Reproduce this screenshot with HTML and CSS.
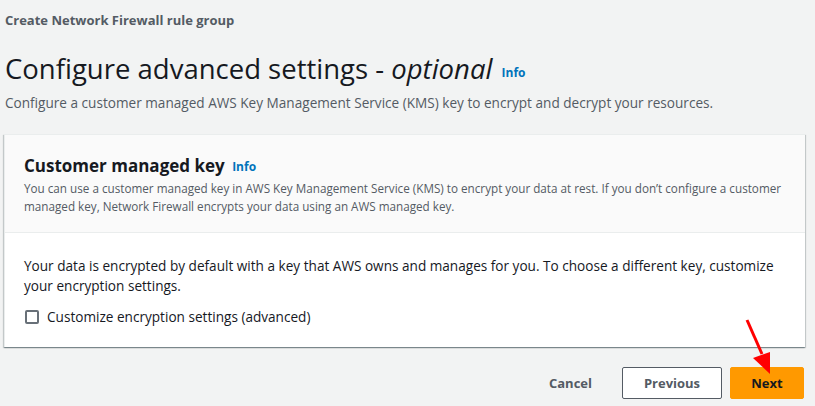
FILE: index.html
```html
<!DOCTYPE html>
<html>
<head>
<meta charset="utf-8">
<link rel="stylesheet" href="styles.css">
</head>
<body>
<div class="page">
  <div class="breadcrumb">Create Network Firewall rule group</div>
  <h1 class="title">Configure advanced settings - <em>optional</em> <a class="info info-lg">Info</a></h1>
  <p class="subtitle">Configure a customer managed AWS Key Management Service (KMS) key to encrypt and decrypt your resources.</p>
  <section class="card">
    <div class="card-header">
      <h2 class="card-title">Customer managed key <a class="info">Info</a></h2>
      <p class="card-desc">You can use a customer managed key in AWS Key Management Service (KMS) to encrypt your data at rest. If you don’t configure a customer managed key, Network Firewall encrypts your data using an AWS managed key.</p>
    </div>
    <div class="card-body">
      <p class="body-text">Your data is encrypted by default with a key that AWS owns and manages for you. To choose a different key, customize your encryption settings.</p>
      <label class="check"><span class="box"></span>Customize encryption settings (advanced)</label>
    </div>
  </section>
  <div class="actions">
    <button class="btn btn-link">Cancel</button>
    <button class="btn btn-normal">Previous</button>
    <button class="btn btn-primary">Next</button>
  </div>
  <svg class="arrow" width="40" height="60" viewBox="0 0 40 60">
    <line x1="7" y1="10" x2="22" y2="44" stroke="#ff0000" stroke-width="3"/>
    <polygon points="13,48 30,42 30,64" fill="#ff0000"/>
  </svg>
</div>
</body>
</html>
```
FILE: styles.css
```css
* { box-sizing: border-box; }
html, body { margin: 0; padding: 0; }
body {
  background: #f2f3f3;
  font-family: "Open Sans", "Noto Sans", sans-serif;
  color: #16191f;
  width: 815px;
  height: 406px;
  overflow: hidden;
}
.page {
  position: relative;
  padding: 12px 10px 0 4px;
}
.breadcrumb {
  font-size: 13px;
  font-weight: 700;
  color: #545b64;
  line-height: 16px;
  padding-left: 1px;
}
.title {
  margin: 23px 0 0 1px;
  font-size: 27.5px;
  font-weight: 400;
  line-height: 36px;
  color: #16191f;
}
.title em { font-style: italic; }
.info {
  color: #0073bb;
  font-size: 12px;
  font-weight: 700;
  margin-left: 3px;
  letter-spacing: 0;
  vertical-align: 1px;
}
.info-lg { vertical-align: 2px; margin-left: 2px; }
.subtitle {
  margin: 3px 0 0 1px;
  font-size: 13.6px;
  line-height: 18px;
  color: #545b64;
}
.card {
  margin-top: 22px;
  width: 801px;
  background: #fff;
  border-top: 1px solid #eaeded;
  border-left: 1px solid #eaeded;
  box-shadow: 0 1px 1px 0 rgba(0,28,36,.3), 1px 1px 1px 0 rgba(0,28,36,.15), -1px 1px 1px 0 rgba(0,28,36,.15);
}
.card-header {
  background: #fafafa;
  border-bottom: 1px solid #eaeded;
  padding: 20px 20px 19px 19px;
  height: 98px;
}
.card-title {
  margin: 0;
  font-size: 17px;
  font-weight: 700;
  line-height: 22px;
}
.card-title .info { margin-left: 3px; }
.card-desc {
  margin: 1px 0 0;
  font-size: 11.7px;
  line-height: 18px;
  color: #545b64;
}
.card-body {
  padding: 22px 20px 18px 19px;
  height: 114px;
}
.body-text {
  margin: 1px 0 0;
  font-size: 13.6px;
  line-height: 20px;
  color: #16191f;
}
.check {
  display: flex;
  align-items: center;
  margin-top: 11px;
  font-size: 13.6px;
  line-height: 20px;
  color: #16191f;
}
.box {
  width: 14px;
  height: 14px;
  border: 2px solid #687078;
  border-radius: 2px;
  margin: 0 8px 0 1px;
  background: #fff;
}
.actions {
  display: flex;
  justify-content: flex-end;
  align-items: center;
  margin-top: 20px;
  padding-right: 1px;
  gap: 8px;
}
.btn {
  font-family: inherit;
  font-size: 13px;
  font-weight: 700;
  line-height: 18px;
  border-radius: 2px;
  height: 32px;
  cursor: pointer;
}
.btn-link {
  background: none;
  border: none;
  color: #545b64;
  padding: 0 20px;
  margin-right: 2px;
}
.btn-normal {
  background: #fff;
  border: 1px solid #545b64;
  color: #545b64;
  width: 100px;
}
.btn-primary {
  background: #ff9900;
  border: 1px solid #ff9900;
  color: #16191f;
  width: 74px;
}
.arrow {
  position: absolute;
  left: 740px;
  top: 310px;
  overflow: visible;
}
```
